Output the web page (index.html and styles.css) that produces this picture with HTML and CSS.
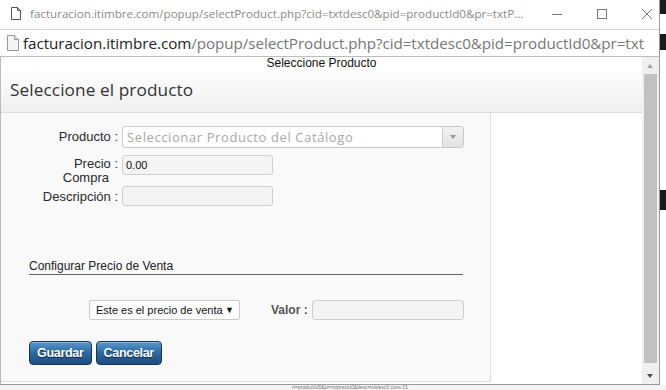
FILE: index.html
```html
<!DOCTYPE html>
<html lang="es">
<head>
  <meta charset="UTF-8" />
  <title>Seleccione Producto</title>
  <link rel="stylesheet" href="styles.css">
</head>
<body>

  <div class="screen">
    <div class="window">

      <div class="titlebar">
        <svg class="page-icon" width="12" height="15" viewBox="0 0 12 15">
          <path d="M1.5 1.5h6l3 3v9h-9z" fill="none" stroke="#555" stroke-width="1"/>
          <path d="M7.5 1.5v3h3" fill="none" stroke="#555" stroke-width="1"/>
        </svg>
        <span class="title-text">facturacion.itimbre.com/popup/selectProduct.php?cid=txtdesc0&amp;pid=productId0&amp;pr=txtP...</span>
        <div class="controls">
          <svg width="12" height="12" viewBox="0 0 12 12"><path d="M1 6.5h10" stroke="#777" stroke-width="1"/></svg>
          <svg width="12" height="12" viewBox="0 0 12 12"><rect x="1.5" y="1.5" width="9" height="9" fill="none" stroke="#777" stroke-width="1"/></svg>
          <svg width="12" height="12" viewBox="0 0 12 12"><path d="M1 1l10 10M11 1L1 11" stroke="#777" stroke-width="1"/></svg>
        </div>
      </div>

      <div class="addressbar">
        <svg class="doc-icon" width="12" height="16" viewBox="0 0 12 16">
          <path d="M0.5 0.5h7l4 4v11h-11z" fill="#f4f4f4" stroke="#999" stroke-width="1"/>
          <path d="M7.5 0.5v4h4" fill="#ddd" stroke="#999" stroke-width="1"/>
        </svg>
        <span class="url"><span class="domain">facturacion.itimbre.com</span>/popup/selectProduct.php?cid=txtdesc0&amp;pid=productId0&amp;pr=txt</span>
      </div>

      <div class="viewport">
        <div class="page">
          <div class="dlg-head">
            <div class="page-title">Seleccione Producto</div>
            <h1>Seleccione el producto</h1>
          </div>

          <div class="dlg-body">
            <div class="panel">
              <div class="form-grid">
                <label class="lbl">Producto :</label>
                <div class="combo">
                  <span class="combo-text">Seleccionar Producto del Catálogo</span>
                  <span class="combo-arrow"></span>
                </div>

                <label class="lbl lbl-wrap">Precio :<br><span class="lbl-sub">Compra</span></label>
                <div class="field field-short">0.00</div>

                <label class="lbl">Descripción :</label>
                <div class="field field-short"></div>
              </div>

              <div class="section-title">Configurar Precio de Venta</div>

              <div class="price-row">
                <div class="select"><span class="select-text">Este es el precio de venta</span><span class="caret">&#9660;</span></div>
                <label class="lbl-bold">Valor :</label>
                <div class="field field-value"></div>
              </div>

              <div class="actions">
                <button type="button" class="btn">Guardar</button>
                <button type="button" class="btn">Cancelar</button>
              </div>
            </div>
          </div>
        </div>

        <div class="scrollbar">
          <span class="sb-up"></span>
          <span class="sb-thumb"></span>
          <span class="sb-down"></span>
        </div>
      </div>
    </div>

    <div class="desktop-edge">
      <span class="blk b1"></span>
      <span class="blk b2"></span>
      <span class="blk b3"></span>
    </div>
  </div>

  <div class="below">ri=productId0&amp;pr=txtprecio0&amp;desc=txtdesc0 cons 01</div>

</body>
</html>
```

FILE: styles.css
```css
body {
  margin: 0;
  width: 666px;
  height: 390px;
  overflow: hidden;
  background: #fff;
  font-family: 'Liberation Sans', Arial, sans-serif;
}

.screen {
  display: flex;
  height: 385px;
}

.window {
  width: 659px;
  border-right: 1px solid #9a9a9a;
  border-bottom: 1px solid #9a9a9a;
  display: flex;
  flex-direction: column;
  background: #fff;
}

/* title bar */
.titlebar {
  height: 29px;
  display: flex;
  align-items: center;
  padding-left: 10px;
  font-family: 'Open Sans', sans-serif;
}

.page-icon {
  margin-right: 8px;
  margin-top: -2px;
}

.title-text {
  font-size: 11.6px;
  color: #8a8a8a;
  white-space: nowrap;
  width: 500px;
  overflow: hidden;
  margin-top: -2px;
}

.controls {
  display: flex;
  gap: 33px;
  margin-left: 21px;
  margin-top: -2px;
}

/* address bar */
.addressbar {
  height: 26px;
  border-top: 1px solid #d6d6d6;
  border-bottom: 1px solid #bdbdbd;
  display: flex;
  align-items: center;
  padding-left: 7px;
  font-family: 'Open Sans', sans-serif;
  overflow: hidden;
}

.doc-icon {
  margin-right: 4px;
  flex-shrink: 0;
}

.url {
  font-size: 15.2px;
  color: #777;
  white-space: nowrap;
  letter-spacing: -0.05px;
}

.domain {
  color: #222;
}

/* page */
.viewport {
  flex: 1;
  display: flex;
  border-left: 1px solid #bbb;
  min-height: 0;
}

.page {
  flex: 1;
  display: flex;
  flex-direction: column;
}

.dlg-head {
  height: 55px;
  background: linear-gradient(#fff 20%, #efefef);
  border-bottom: 1px solid #dcdcdc;
}

.page-title {
  text-align: center;
  font-size: 12px;
  color: #111;
  line-height: 14px;
  margin-top: -1px;
}

.dlg-head h1 {
  margin: 8px 0 0 9px;
  font-family: 'Open Sans', sans-serif;
  font-weight: normal;
  font-size: 17.2px;
  color: #333;
  letter-spacing: 0.1px;
}

.dlg-body {
  flex: 1;
  display: flex;
  padding-bottom: 2px;
}

.panel {
  width: 489px;
  background: #f9f9f9;
  border-right: 1px solid #ddd;
  border-bottom: 1px solid #ddd;
  padding-top: 13px;
}

.form-grid {
  display: grid;
  grid-template-columns: 117px auto;
  grid-template-rows: 22px 20px 20px;
  column-gap: 4px;
  align-items: start;
}

.form-grid > :nth-child(3),
.form-grid > :nth-child(4) {
  margin-top: 7px;
}

.form-grid > :nth-child(5),
.form-grid > :nth-child(6) {
  margin-top: 18px;
}

.lbl {
  text-align: right;
  font-size: 13px;
  color: #2a2a2a;
  line-height: 14px;
  padding-top: 4px;
  white-space: nowrap;
}

.lbl-wrap {
  padding-top: 2px;
  height: 20px;
  box-sizing: border-box;
}

.lbl-sub {
  padding-right: 9px;
}

.combo {
  width: 340px;
  height: 20px;
  border: 1px solid #c8c8c8;
  border-radius: 3px;
  background: #fff;
  display: flex;
  align-items: center;
}

.combo-text {
  flex: 1;
  padding-left: 4px;
  font-family: 'Open Sans', sans-serif;
  font-size: 13px;
  color: #a8a8a8;
  letter-spacing: 0.6px;
}

.combo-arrow {
  width: 20px;
  height: 20px;
  border-left: 1px solid #ccc;
  background: linear-gradient(#f2f2f2, #e2e2e2);
  border-radius: 0 3px 3px 0;
  position: relative;
}

.combo-arrow::after {
  content: '';
  position: absolute;
  left: 7px;
  top: 8px;
  border-left: 3px solid transparent;
  border-right: 3px solid transparent;
  border-top: 4px solid #999;
}

.field {
  height: 18px;
  border: 1px solid #cfcfcf;
  border-radius: 3px;
  background: #f4f4f4;
  font-size: 11px;
  color: #111;
  line-height: 18px;
  padding-left: 3px;
  box-sizing: content-box;
}

.field-short {
  width: 146px;
}

.section-title {
  margin: 71px 0 0 28px;
  width: 434px;
  font-size: 12px;
  color: #222;
  line-height: 14px;
  padding-bottom: 1px;
  border-bottom: 1px solid #666;
}

.price-row {
  display: flex;
  align-items: center;
  margin: 25px 0 0 88px;
}

.select {
  width: 143px;
  height: 18px;
  border: 1px solid #ccc;
  border-radius: 2px;
  background: #fff;
  font-size: 11px;
  color: #111;
  line-height: 18px;
  padding-left: 6px;
  white-space: nowrap;
  display: flex;
}

.select-text {
  width: 128px;
}

.caret {
  font-size: 9px;
  padding-left: 1px;
}

.lbl-bold {
  margin-left: 31px;
  margin-right: 4px;
  font-size: 12px;
  font-weight: bold;
  color: #555;
}

.field-value {
  width: 147px;
}

.actions {
  display: flex;
  gap: 4px;
  margin: 21px 0 0 28px;
}

.btn {
  height: 24px;
  padding: 0 7px;
  border: 1px solid #17375b;
  border-radius: 4px;
  background: linear-gradient(#5b98cc, #2c68a2 50%, #1d4d80);
  color: #fff;
  font-family: 'Liberation Sans', Arial, sans-serif;
  font-size: 12.5px;
  font-weight: bold;
  letter-spacing: -0.3px;
  text-shadow: 0 1px 1px #0c2440;
  box-shadow: inset 0 1px 0 rgba(255, 255, 255, 0.3);
}

/* scrollbar */
.scrollbar {
  width: 17px;
  background: #f0f0f0;
  display: flex;
  flex-direction: column;
  align-items: center;
}

.sb-up,
.sb-down {
  height: 17px;
  width: 17px;
  position: relative;
}

.sb-up::after,
.sb-down::after {
  content: '';
  position: absolute;
  left: 5px;
  top: 7px;
  border-left: 3.5px solid transparent;
  border-right: 3.5px solid transparent;
}

.sb-up::after {
  border-bottom: 4px solid #a3a3a3;
}

.sb-down::after {
  border-top: 4px solid #505050;
}

.sb-thumb {
  flex: 1;
  width: 13px;
  background: #c1c1c1;
  margin-bottom: 4px;
}

/* desktop behind the popup */
.desktop-edge {
  flex: 1;
  display: flex;
  flex-direction: column;
  background: #fff;
}

.blk {
  display: block;
  background: #1a1a1a;
}

.b1 { height: 14px; }
.b2 { height: 16px; margin-top: 20px; }
.b3 { height: 20px; margin-top: 140px; }

.below {
  height: 5px;
  overflow: hidden;
  padding-left: 292px;
  font-size: 5px;
  line-height: 5px;
  color: #777;
  background: #f4f4f4;
  white-space: nowrap;
}
```
